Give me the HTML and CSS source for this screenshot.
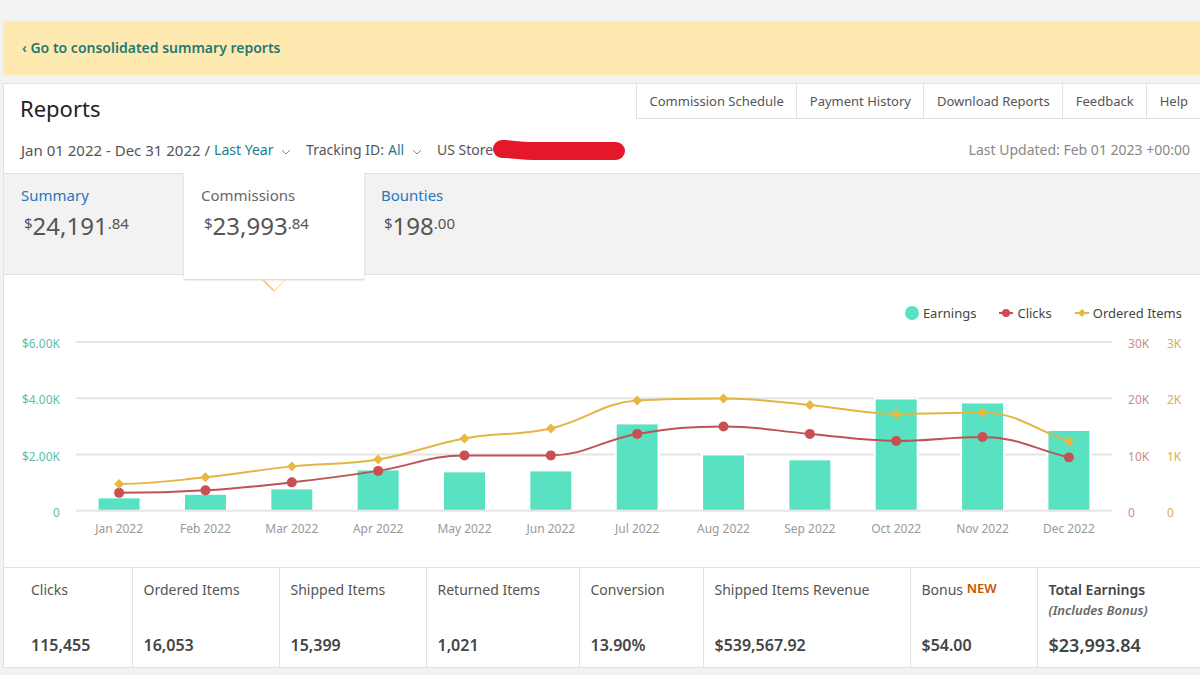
FILE: index.html
```html
<!DOCTYPE html>
<html lang="en">

<head>
    <meta charset="UTF-8">
    <meta name="viewport" content="width=device-width, initial-scale=1.0">
    <title>Reports</title>
    <link rel="stylesheet" href="styles.css">
</head>

<body>

    <div class="banner">
        <a href="#">‹ Go to consolidated summary reports</a>
    </div>

    <main class="panel">
        <header class="panel-header">
            <h1>Reports</h1>
            <nav class="top-links">
                <a href="#">Commission Schedule</a>
                <a href="#">Payment History</a>
                <a href="#">Download Reports</a>
                <a href="#">Feedback</a>
                <a href="#">Help</a>
            </nav>
        </header>

        <div class="filters">
            <div class="filter">
                <label class="dates" for="period">Jan 01 2022 - Dec 31 2022 /</label>
                <select id="period">
                    <option>Last Year</option>
                </select>
                <svg class="chevron" viewBox="0 0 8 6"><path d="M0 1l4 4 4-4" /></svg>
            </div>
            <div class="filter">
                <label for="tracking">Tracking ID:</label>
                <select id="tracking">
                    <option>All</option>
                </select>
                <svg class="chevron" viewBox="0 0 8 6"><path d="M0 1l4 4 4-4" /></svg>
            </div>
            <div class="store">
                <span>US Store</span>
                <svg class="marker" viewBox="0 0 132 20"><path d="M9 0C18 0 26 2 36 2h87a8 8 0 0 1 0 18H40C28 20 20 18 9 18A9 9 0 0 1 9 0z" /></svg>
            </div>
            <span class="updated">Last Updated: Feb 01 2023 +00:00</span>
        </div>

        <div class="tabs">
            <button class="tab" type="button">
                <span class="tab-name">Summary</span>
                <span class="amount"><small>$</small>24,191<small>.84</small></span>
            </button>
            <button class="tab active" type="button">
                <span class="tab-name">Commissions</span>
                <span class="amount"><small>$</small>23,993<small>.84</small></span>
                <svg class="notch" viewBox="0 0 26 13"><path class="notch-left" d="M1 0l12 12" /><path class="notch-right" d="M13 12L25 0" /></svg>
            </button>
            <button class="tab" type="button">
                <span class="tab-name">Bounties</span>
                <span class="amount"><small>$</small>198<small>.00</small></span>
            </button>
        </div>

        <section class="chart">
            <ul class="legend">
                <li><svg class="legend-dot" viewBox="0 0 14 14"><circle cx="7" cy="7" r="7" /></svg>Earnings</li>
                <li><svg class="legend-line" viewBox="0 0 14 10"><path class="line clicks" d="M0 5h14" /><circle class="point-clicks" cx="7" cy="5" r="4" /></svg>Clicks</li>
                <li><svg class="legend-line" viewBox="0 0 14 10"><path class="line items" d="M0 5h14" /><path class="point-items" d="M7 1l4 4-4 4-4-4z" /></svg>Ordered Items</li>
            </ul>
            <svg id="plot" viewBox="0 0 1197 241"></svg>
        </section>

        <table class="totals">
            <colgroup>
                <col class="col-clicks">
                <col class="col-items">
                <col class="col-items">
                <col class="col-returned">
                <col class="col-conversion">
                <col class="col-revenue">
                <col class="col-bonus">
                <col>
            </colgroup>
            <thead>
                <tr>
                    <th>Clicks</th>
                    <th>Ordered Items</th>
                    <th>Shipped Items</th>
                    <th>Returned Items</th>
                    <th>Conversion</th>
                    <th>Shipped Items Revenue</th>
                    <th>Bonus <span class="new">NEW</span></th>
                    <th class="total">Total Earnings <em>(Includes Bonus)</em></th>
                </tr>
            </thead>
            <tbody>
                <tr>
                    <td>115,455</td>
                    <td>16,053</td>
                    <td>15,399</td>
                    <td>1,021</td>
                    <td>13.90%</td>
                    <td>$539,567.92</td>
                    <td>$54.00</td>
                    <td class="total">$23,993.84</td>
                </tr>
            </tbody>
        </table>
    </main>

    <script src="chart.js"></script>
</body>

</html>
```
FILE: styles.css
```css
* {
    box-sizing: border-box;
}

body {
    margin: 0;
    padding: 21px 0 7px 3px;
    background-color: #f2f2f2;
    color: #555;
    font-family: "Noto Sans", "Open Sans", sans-serif;
    font-size: 14px;
    line-height: 20px;
}

a {
    color: inherit;
    text-decoration: none;
}

.banner {
    padding: 17px 19px;
    background-color: #feeab1;
    color: #1f7a72;
    font-weight: 600;
}

.panel {
    margin-top: 8px;
    background-color: #fff;
    border: 1px solid #e2e2e2;
    border-width: 1px 0 1px 1px;
}

/* header */
.panel-header {
    display: flex;
    justify-content: space-between;
    align-items: flex-start;
}

h1 {
    margin: 9px 0 0 16px;
    color: #222;
    font-size: 22px;
    font-weight: 400;
    line-height: 30px;
}

.top-links {
    display: flex;
    border-bottom: 1px solid #e2e2e2;
    font-size: 13px;
}

.top-links a {
    padding: 7px 12px 7px 13px;
    border-left: 1px solid #e2e2e2;
}

.filters {
    display: flex;
    align-items: center;
    gap: 16px;
    padding: 17px 10px 13px 17px;
}

.filter,
.store {
    display: flex;
    align-items: center;
}

.dates {
    font-size: 15px;
}

select {
    appearance: none;
    margin: 0 8px 0 4px;
    padding: 0;
    border: none;
    background: none;
    color: #17808c;
    font: inherit;
}

.chevron {
    width: 8px;
    height: 6px;
    margin-top: 4px;
    fill: none;
    stroke: #888;
}

.marker {
    width: 132px;
    height: 20px;
    fill: #e5182b;
}

.updated {
    margin-left: auto;
    color: #888;
}

/* tabs */
.tabs {
    display: flex;
    height: 102px;
    background-color: #f2f2f2;
    border: 1px solid #e2e2e2;
    border-width: 1px 0;
}

.tab {
    position: relative;
    display: flex;
    flex-direction: column;
    align-items: flex-start;
    width: 180px;
    padding: 11px 17px;
    border: none;
    background: none;
    color: #555;
    font: inherit;
    font-size: 15px;
    text-align: left;
    cursor: pointer;
}

.tab-name {
    color: #2a76bb;
}

.tab.active {
    margin: -1px 0 -5px;
    padding-top: 12px;
    background-color: #fff;
    box-shadow: 0 1px 2px #ccc;
}

.active .tab-name {
    color: #666;
}

.amount {
    margin: 7px 0 0 3px;
    font-size: 24px;
    line-height: 28px;
}

.amount small {
    font-size: 15px;
    line-height: 15px;
    vertical-align: 6px;
}

.notch {
    position: absolute;
    top: 100%;
    left: 50%;
    width: 26px;
    height: 13px;
    margin-left: -13px;
    fill: none;
}

.notch-left {
    stroke: #f5cf96;
    stroke-width: 2;
}

.notch-right {
    stroke: #f5cf96;
}

/* chart */
.legend {
    display: flex;
    justify-content: flex-end;
    gap: 23px;
    margin: 0;
    padding: 28px 18px 3px;
    list-style: none;
    color: #444;
    font-size: 13px;
}

.legend li {
    display: flex;
    align-items: center;
    gap: 4px;
}

.legend-dot {
    width: 14px;
    height: 14px;
    fill: #59e2c1;
}

.legend-line {
    width: 14px;
    height: 10px;
}

#plot {
    display: block;
    width: 100%;
    font-size: 12px;
}

.grid {
    stroke: #e4e4e4;
    stroke-width: 2;
}

.bar {
    fill: #59e2c1;
    stroke: #fff;
    stroke-width: 2;
}

.line {
    fill: none;
    stroke-width: 2;
}

.clicks {
    stroke: #bd5358;
}

.items {
    stroke: #e3b545;
}

.point-clicks {
    fill: #c94f52;
}

.point-items {
    fill: #e8b840;
}

.month {
    fill: #999;
    text-anchor: middle;
}

.axis-earnings {
    fill: #5cc0a8;
    text-anchor: end;
}

.axis-clicks {
    fill: #cc8a8d;
}

.axis-items {
    fill: #d1b25c;
}

/* totals */
.totals {
    width: 100%;
    table-layout: fixed;
    border-collapse: collapse;
    border-top: 1px solid #e2e2e2;
    text-align: left;
}

.col-clicks {
    width: 128px;
}

.col-items {
    width: 147px;
}

.col-returned {
    width: 153px;
}

.col-conversion {
    width: 124px;
}

.col-revenue {
    width: 207px;
}

.col-bonus {
    width: 127px;
}

.totals th,
.totals td {
    padding: 12px 0 0 11px;
    border-left: 1px solid #e2e2e2;
    vertical-align: top;
}

.totals th {
    height: 56px;
    font-weight: 400;
}

.totals td {
    height: 44px;
    color: #444;
    font-size: 16px;
    font-weight: 600;
}

.totals th:first-child,
.totals td:first-child {
    padding-left: 27px;
    border-left: none;
}

.totals th.total {
    color: #444;
    font-weight: 600;
}

.totals td.total {
    font-size: 18px;
}

.total em {
    display: block;
    color: #666;
    font-size: 13px;
}

.new {
    color: #c45500;
    font-size: 13px;
    font-weight: 600;
    line-height: 12px;
    vertical-align: 2px;
}
```
FILE: chart.js
```js
var plot = document.getElementById('plot');

var months = ['Jan', 'Feb', 'Mar', 'Apr', 'May', 'Jun', 'Jul', 'Aug', 'Sep', 'Oct', 'Nov', 'Dec'];
var earnings = [444, 568, 763, 1438, 1367, 1402, 3071, 1970, 1793, 3958, 3816, 2840];
var clicks = [3195, 3640, 5060, 7100, 9850, 9850, 13670, 15000, 13670, 12425, 13135, 9500];
var items = [479, 595, 790, 914, 1287, 1464, 1961, 1997, 1881, 1722, 1748, 1234];

var left = 72;
var right = 1109;
var bottom = 185;
var plotHeight = 169;
var barWidth = 43;
var step = (right - left) / months.length;

function add(name, attrs, text) {
    var el = document.createElementNS('http://www.w3.org/2000/svg', name);
    for (var key in attrs) {
        el.setAttribute(key, attrs[key]);
    }
    if (text) {
        el.textContent = text;
    }
    plot.appendChild(el);
}

function toPoints(values, max) {
    return values.map(function (value, i) {
        return { x: left + step * (i + 0.5), y: bottom - value / max * plotHeight };
    });
}

// smooth curve that never goes past the neighbouring points
function spline(points) {
    var slopes = points.map(function (p, i) {
        if (i === 0 || i === points.length - 1) {
            return null;
        }
        var before = p.y - points[i - 1].y;
        var after = points[i + 1].y - p.y;
        if (before * after <= 0) {
            return 0;
        }
        var slope = (before + after) / 2;
        var limit = 2.5 * Math.min(Math.abs(before), Math.abs(after));
        return Math.max(-limit, Math.min(limit, slope));
    });
    var d = 'M' + points[0].x + ' ' + points[0].y;
    for (var i = 1; i < points.length; i++) {
        var a = points[i - 1];
        var b = points[i];
        var c1 = a.y + (slopes[i - 1] === null ? 0 : slopes[i - 1] * 0.4);
        var c2 = b.y - (slopes[i] === null ? (b.y - a.y) * 0.4 : slopes[i] * 0.4);
        d += 'C' + [a.x + step * 0.4, c1, b.x - step * 0.4, c2, b.x, b.y].join(' ');
    }
    return d;
}

// bars sit over the grid but not over the base line
function drawGridLine(n) {
    var y = bottom - plotHeight / 3 * n;
    add('line', { 'class': 'grid', x1: left, x2: right, y1: y, y2: y });
    add('text', { 'class': 'axis-earnings', x: 56, y: y + 6 }, n ? '$' + n * 2 + '.00K' : '0');
    add('text', { 'class': 'axis-clicks', x: 1125, y: y + 6 }, n ? n * 10 + 'K' : '0');
    add('text', { 'class': 'axis-items', x: 1164, y: y + 6 }, n ? n + 'K' : '0');
}

[1, 2, 3].forEach(drawGridLine);

toPoints(earnings, 6000).forEach(function (p, i) {
    add('rect', { 'class': 'bar', x: p.x - barWidth / 2, y: p.y - 1, width: barWidth, height: bottom - p.y + 1 });
    add('text', { 'class': 'month', x: p.x, y: 207 }, months[i] + ' 2022');
});

drawGridLine(0);

var clickPoints = toPoints(clicks, 30000);
add('path', { 'class': 'line clicks', d: spline(clickPoints) });
clickPoints.forEach(function (p) {
    add('circle', { 'class': 'point-clicks', cx: p.x, cy: p.y, r: 5 });
});

var itemPoints = toPoints(items, 3000);
add('path', { 'class': 'line items', d: spline(itemPoints) });
itemPoints.forEach(function (p) {
    add('path', { 'class': 'point-items', d: 'M' + p.x + ' ' + (p.y - 5) + 'l5 5-5 5-5-5z' });
});
```
